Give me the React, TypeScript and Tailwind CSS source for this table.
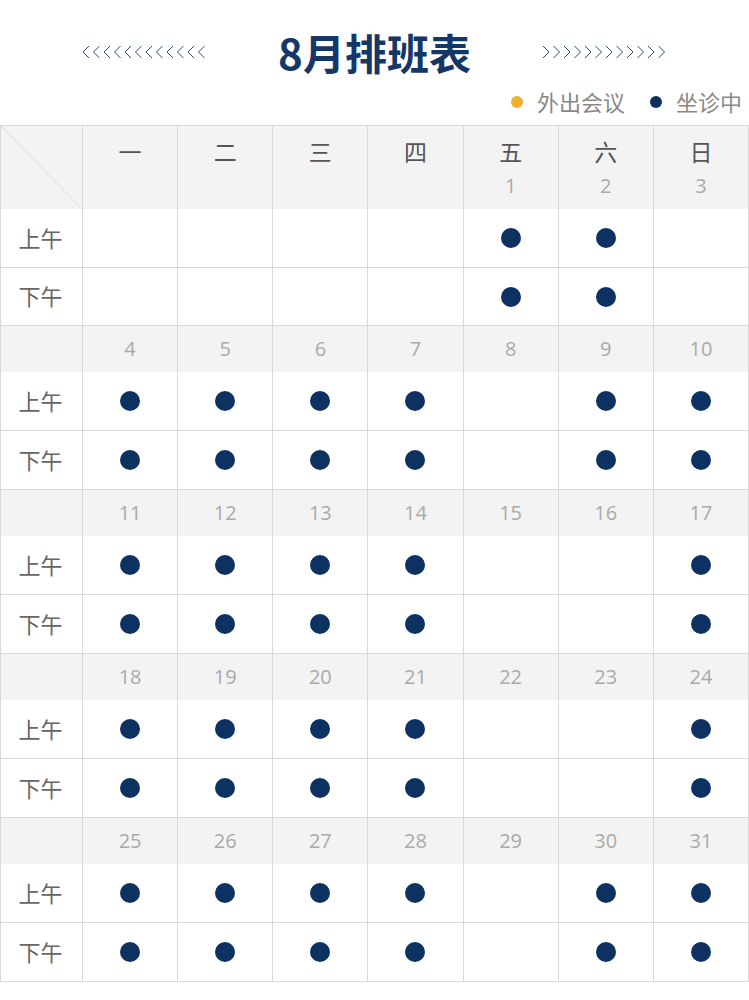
import React from "react";

const FONT = '"Open Sans", "Noto Sans CJK SC", sans-serif';

function Chevrons({ dir }: { dir: "left" | "right" }) {
  const items = Array.from({ length: 12 });
  return (
    <svg width="127" height="14" viewBox="0 0 127 14" className="block">
      {items.map((_, i) => {
        const x = 2 + i * 10.5;
        const pts =
          dir === "left"
            ? `${x + 6},1 ${x},7 ${x + 6},13`
            : `${x},1 ${x + 6},7 ${x},13`;
        return <polyline key={i} points={pts} fill="none" stroke="#2b4a7a" strokeWidth="1" />;
      })}
    </svg>
  );
}

const weekdays = ["一", "二", "三", "四", "五", "六", "日"];

type Week = { days: (number | null)[]; on: boolean[] };

const weeks: Week[] = [
  { days: [4, 5, 6, 7, 8, 9, 10], on: [true, true, true, true, false, true, true] },
  { days: [11, 12, 13, 14, 15, 16, 17], on: [true, true, true, true, false, false, true] },
  { days: [18, 19, 20, 21, 22, 23, 24], on: [true, true, true, true, false, false, true] },
  { days: [25, 26, 27, 28, 29, 30, 31], on: [true, true, true, true, false, true, true] },
];

const firstOn = [false, false, false, false, true, true, false];
const firstDays = [null, null, null, null, 1, 2, 3];

function Dot() {
  return <div className="w-[20px] h-[20px] rounded-full bg-[#0d3262]" />;
}

function SlotRow({ label, on, h }: { label: string; on: boolean[]; h: string }) {
  return (
    <>
      <div className={`${h} border-r border-b border-[#d9d9d9] flex items-center justify-center pr-[2px] text-[22px] text-[#666]`}>
        {label}
      </div>
      {on.map((v, i) => (
        <div key={i} className={`${h} border-r border-b border-[#d9d9d9] flex items-center justify-center`}>
          {v ? <Dot /> : null}
        </div>
      ))}
    </>
  );
}

export default function App() {
  return (
    <div className="w-[749px] h-[1000px] bg-white" style={{ fontFamily: FONT }}>
      <div className="h-[125px] relative">
        <div className="flex items-center justify-center pt-[28px]">
          <Chevrons dir="left" />
          <div className="mx-[70px] text-[42px] leading-[48px] font-bold text-[#153768]" style={{ fontFamily: '"Noto Sans CJK SC", sans-serif' }}>
            8月排班表
          </div>
          <Chevrons dir="right" />
        </div>
        <div className="flex items-center justify-end pr-[7px] mt-[12px] text-[22px] leading-[28px] text-[#888]">
          <span className="w-[12px] h-[12px] rounded-full bg-[#eeb02b] mr-[14px]" />
          <span>外出会议</span>
          <span className="w-[12px] h-[12px] rounded-full bg-[#0d3262] ml-[25px] mr-[14px]" />
          <span>坐诊中</span>
        </div>
      </div>

      <div className="grid grid-cols-[82px_repeat(7,1fr)] border-l border-t border-[#d9d9d9]">
        {/* header */}
        <div className="h-[83px] border-r border-[#d9d9d9] bg-[#f3f3f3] relative">
          <svg className="absolute inset-0 w-full h-full" viewBox="0 0 81 83" preserveAspectRatio="none">
            <line x1="0" y1="0" x2="81" y2="83" stroke="#dcdcdc" strokeWidth="1" />
          </svg>
        </div>
        {weekdays.map((w, i) => (
          <div key={w} className="h-[83px] border-r border-[#d9d9d9] bg-[#f3f3f3] flex flex-col items-center pt-[11px]">
            <div className="text-[23px] leading-[30px] text-[#555]">{w}</div>
            <div className="text-[20px] leading-[24px] text-[#aaa] mt-[7px]">{firstDays[i] ?? ""}</div>
          </div>
        ))}
        <SlotRow label="上午" on={firstOn} h="h-[59px]" />
        <SlotRow label="下午" on={firstOn} h="h-[58px]" />

        {weeks.map((wk, wi) => (
          <React.Fragment key={wi}>
            <div className="h-[46px] border-r border-[#d9d9d9] bg-[#f3f3f3]" />
            {wk.days.map((d, i) => (
              <div key={i} className="h-[46px] border-r border-[#d9d9d9] bg-[#f3f3f3] flex items-center justify-center text-[20px] text-[#aaa]">
                {d}
              </div>
            ))}
            <SlotRow label="上午" on={wk.on} h="h-[59px]" />
            <SlotRow label="下午" on={wk.on} h="h-[59px]" />
          </React.Fragment>
        ))}
      </div>
    </div>
  );
}
